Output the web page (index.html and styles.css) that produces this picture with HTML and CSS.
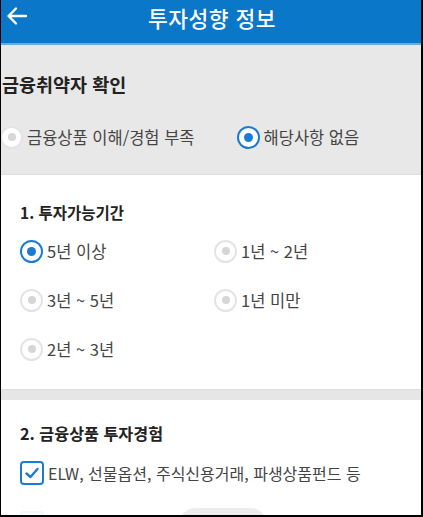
FILE: index.html
```html
<!DOCTYPE html>
<html lang="ko">
<head>
    <meta charset="UTF-8">
    <meta name="viewport" content="width=device-width, initial-scale=1.0">
    <title>투자성향 정보</title>
    <link rel="stylesheet" href="styles.css">
</head>
<body>
    <div class="screen">
        <header class="topbar">
            <svg class="back" width="22" height="20" viewBox="0 0 22 20">
                <path d="M20 10H3M10 2.5L2.5 10L10 17.5" fill="none" stroke="#fff" stroke-width="2.4" stroke-linecap="round" stroke-linejoin="round"/>
            </svg>
            <h1>투자성향 정보</h1>
        </header>

        <section class="weak">
            <h2>금융취약자 확인</h2>
            <div class="radio-row">
                <label class="opt"><span class="radio"></span>금융상품 이해/경험 부족</label>
                <label class="opt"><span class="radio on"></span>해당사항 없음</label>
            </div>
        </section>

        <section class="block">
            <h3>1. 투자가능기간</h3>
            <div class="grid">
                <label class="opt"><span class="radio on"></span>5년 이상</label>
                <label class="opt"><span class="radio"></span>1년 ~ 2년</label>
                <label class="opt"><span class="radio"></span>3년 ~ 5년</label>
                <label class="opt"><span class="radio"></span>1년 미만</label>
                <label class="opt"><span class="radio"></span>2년 ~ 3년</label>
            </div>
        </section>

        <div class="gap"></div>

        <section class="block second">
            <h3>2. 금융상품 투자경험</h3>
            <label class="check-opt"><span class="check on">
                <svg width="16" height="14" viewBox="0 0 16 14"><path d="M2.5 7.5L6.5 11L13.5 3" fill="none" stroke="#1a7bd6" stroke-width="2.4" stroke-linecap="round" stroke-linejoin="round"/></svg>
            </span>ELW, 선물옵션, 주식신용거래, 파생상품펀드 등</label>
            <div class="check-opt faded">
                <span class="check"></span>주식, 주식형펀드
                <span class="pill"></span>
                <span class="tail">0, 주식형펀드 등</span>
            </div>
        </section>
    </div>
</body>
</html>
```

FILE: styles.css
```css
html, body {
    margin: 0;
    padding: 0;
}

body {
    font-family: "Noto Sans CJK KR", "Noto Sans", sans-serif;
    background: #fff;
    color: #333;
}

.screen {
    width: 423px;
    height: 517px;
    box-sizing: border-box;
    border-left: 1px solid #000;
    border-right: 2px solid #000;
    border-bottom: 2px solid #000;
    overflow: hidden;
    background: #fff;
}

.topbar {
    height: 43px;
    background: #0a77c8;
    border-bottom: 2px solid #6aa9e2;
    display: flex;
    align-items: center;
    justify-content: center;
    position: relative;
}

.back {
    position: absolute;
    left: 5px;
    top: 6px;
}

.topbar h1 {
    margin: 0 0 8px 2px;
    font-size: 21.5px;
    font-weight: 500;
    color: #fff;
    letter-spacing: 0.5px;
}

.weak {
    background: #e8e8e8;
    height: 130px;
    padding: 26px 0 0 1px;
    box-sizing: border-box;
    border-bottom: 1px solid #ddd;
}

.weak h2 {
    margin: 0 0 28px;
    font-size: 18.5px;
    font-weight: 700;
    color: #222;
    line-height: 26px;
}

.radio-row {
    display: flex;
    gap: 42px;
    margin-left: -2px;
}

.opt {
    display: flex;
    align-items: center;
    gap: 4px;
    font-size: 16.5px;
    color: #444;
    height: 24px;
}

.radio {
    width: 19px;
    height: 19px;
    border-radius: 50%;
    border: 2px solid #e4e4e4;
    background: #fff;
    display: flex;
    align-items: center;
    justify-content: center;
    flex: none;
}

.radio::after {
    content: "";
    width: 8px;
    height: 8px;
    border-radius: 50%;
    background: #d6d6d6;
}

.radio.on {
    border-color: #1a7bd6;
}

.radio.on::after {
    width: 9px;
    height: 9px;
    background: #1a7bd6;
}

.block {
    padding: 26px 0 0 19px;
}

.block h3 {
    margin: 0 0 16px;
    font-size: 15.5px;
    font-weight: 700;
    color: #222;
    line-height: 22px;
}

.grid {
    display: grid;
    grid-template-columns: 194px 1fr;
    row-gap: 25px;
    padding-bottom: 28px;
}

.gap {
    height: 10px;
    background: #e6e6e6;
    border-top: 1px solid #ddd;
}

.second {
    padding-top: 22px;
}

.second h3 {
    font-size: 16.2px;
}

.check-opt {
    display: flex;
    align-items: center;
    gap: 4px;
    font-size: 16px;
    color: #444;
    height: 26px;
}

.check {
    width: 20px;
    height: 20px;
    border: 2px solid #1a7bd6;
    border-radius: 4px;
    display: flex;
    align-items: center;
    justify-content: center;
    flex: none;
}

.faded {
    margin-top: 24px;
    opacity: 0.15;
}

.faded .check {
    border-color: #9cc4ea;
}

.pill {
    width: 86px;
    height: 30px;
    border-radius: 15px;
    background: #888;
    margin-left: 16px;
}

.tail {
    margin-left: 8px;
}
```
